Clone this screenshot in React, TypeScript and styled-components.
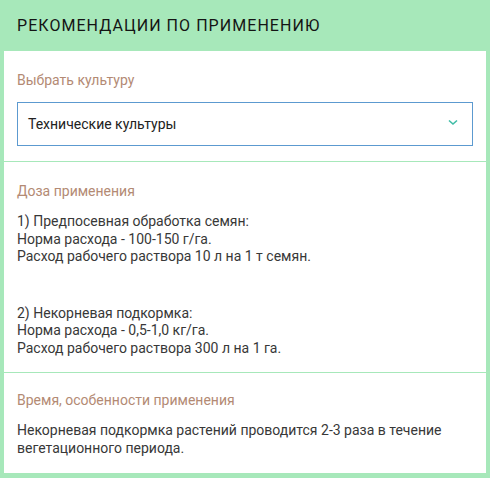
import React from "react";
import styled, { createGlobalStyle } from "styled-components";

const GREEN = "#a7e8ba";

const Global = createGlobalStyle`
  html, body {
    margin: 0;
    padding: 0;
    background: #ffffff;
  }
  body {
    font-family: Roboto, "Noto Sans", "Liberation Sans", sans-serif;
    -webkit-font-smoothing: antialiased;
  }
`;

const Panel = styled.div`
  width: 490px;
  box-sizing: border-box;
  background: ${GREEN};
  padding: 0 4px 5px;
`;

const Header = styled.h2`
  margin: 0;
  height: 51px;
  box-sizing: border-box;
  padding: 16px 0 0 13px;
  font-size: 16px;
  line-height: 20px;
  font-weight: 400;
  letter-spacing: 1.05px;
  color: #141414;
  text-transform: uppercase;
`;

const Body = styled.div`
  background: #ffffff;
`;

const Section = styled.section<{ $top: number; $bottom: number }>`
  padding: ${(p) => p.$top}px 13px ${(p) => p.$bottom}px;
  & + & {
    border-top: 1px solid ${GREEN};
  }
`;

const Label = styled.div`
  font-size: 14px;
  line-height: 18px;
  color: #b38a74;
  margin-bottom: 13px;
`;

const Select = styled.div`
  height: 44px;
  box-sizing: border-box;
  border: 1px solid #5c9ad0;
  display: flex;
  align-items: center;
  justify-content: space-between;
  padding: 0 14px 0 10px;
  font-size: 14px;
  color: #222222;
`;

const Chevron = styled.svg`
  width: 10px;
  height: 7px;
  flex: none;
  margin-top: -4px;
`;

const Text = styled.p<{ $gap?: number }>`
  margin: ${(p) => p.$gap ?? 0}px 0 0;
  font-size: 14px;
  line-height: 17.5px;
  color: #383838;
`;

export default function App() {
  return (
    <>
      <Global />
      <Panel>
        <Header>Рекомендации по применению</Header>
        <Body>
          <Section $top={20} $bottom={15}>
            <Label>Выбрать культуру</Label>
            <Select>
              <span>Технические культуры</span>
              <Chevron viewBox="0 0 10 7">
                <path d="M1 1.5 L5 5 L9 1.5" fill="none" stroke="#3fbca6" strokeWidth="1.6" />
              </Chevron>
            </Select>
          </Section>
          <Section $top={20} $bottom={15}>
            <Label>Доза применения</Label>
            <Text>
              1) Предпосевная обработка семян:
              <br />
              Норма расхода - 100-150 г/га.
              <br />
              Расход рабочего раствора 10 л на 1 т семян.
            </Text>
            <Text $gap={39}>
              2) Некорневая подкормка:
              <br />
              Норма расхода - 0,5-1,0 кг/га.
              <br />
              Расход рабочего раствора 300 л на 1 га.
            </Text>
          </Section>
          <Section $top={18} $bottom={16}>
            <Label>Время, особенности применения</Label>
            <Text>
              Некорневая подкормка растений проводится 2-3 раза в течение
              <br />
              вегетационного периода.
            </Text>
          </Section>
        </Body>
      </Panel>
    </>
  );
}
